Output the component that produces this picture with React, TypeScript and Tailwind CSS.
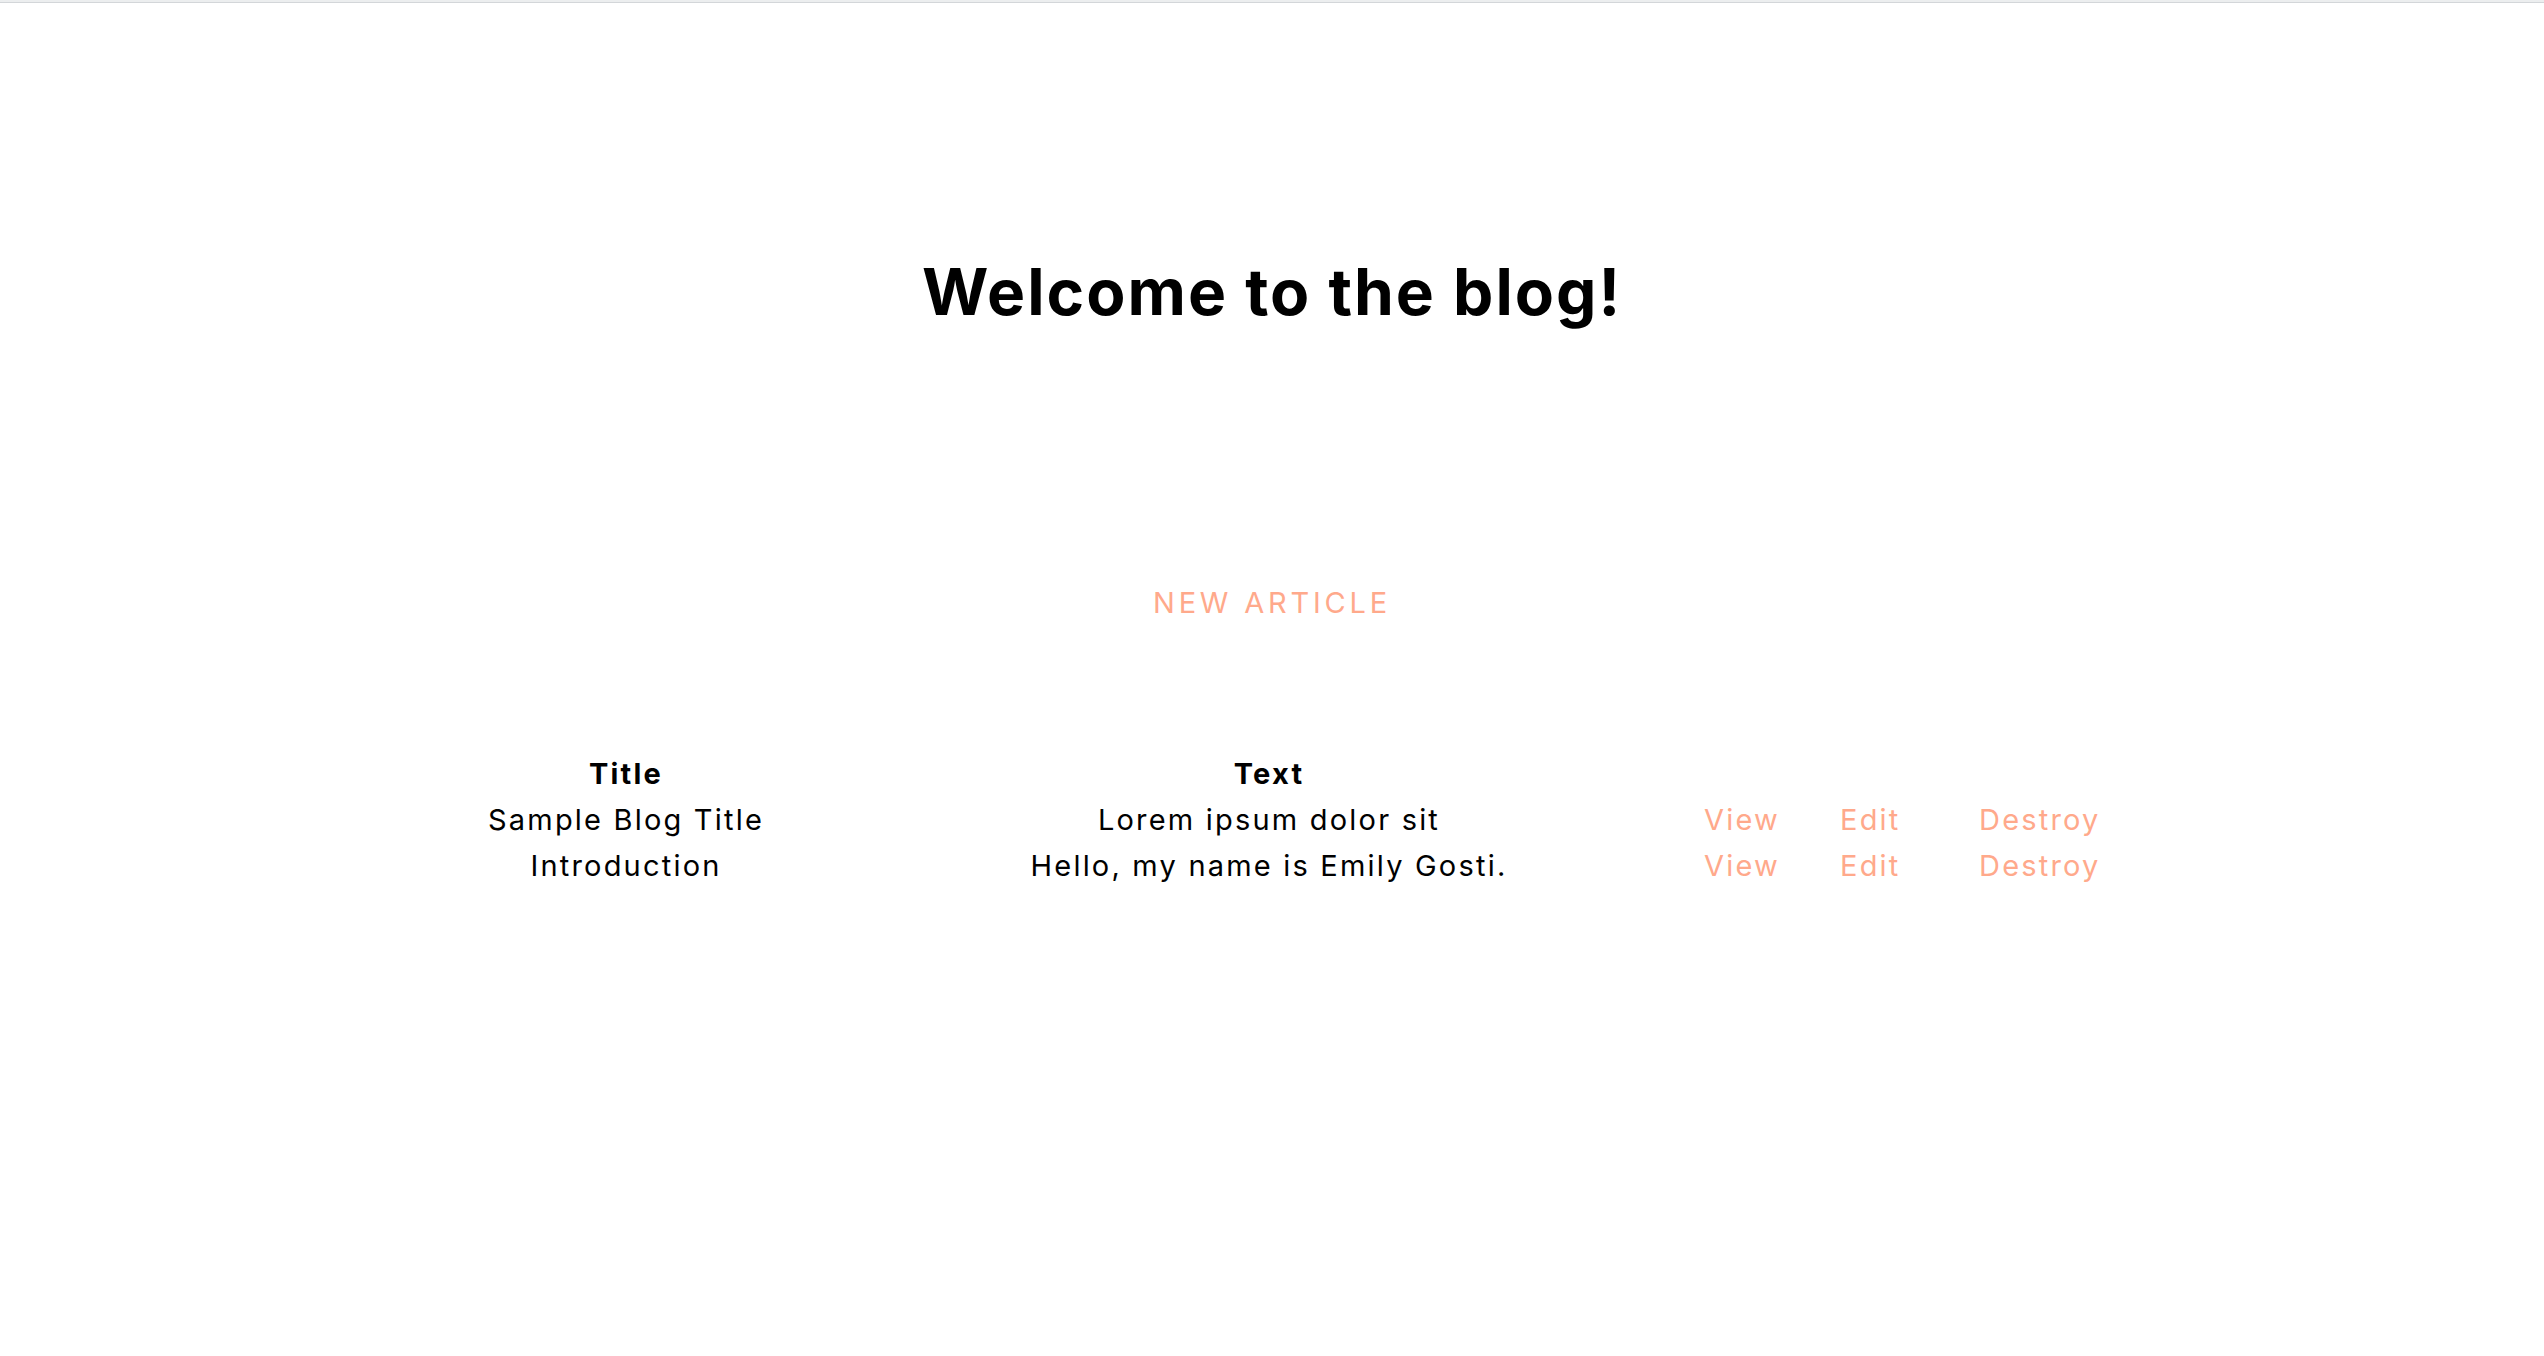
import React from 'react';

interface Article {
  title: string;
  text: string;
}

const articles: Article[] = [
  { title: 'Sample Blog Title', text: 'Lorem ipsum dolor sit' },
  { title: 'Introduction', text: 'Hello, my name is Emily Gosti.' },
];

const linkClass = 'text-[#ffa98b] no-underline';

const App: React.FC = () => {
  return (
    <div className="min-h-[1356px] bg-white text-black font-['Inter','Liberation_Sans',sans-serif]">
      {/* top strip */}
      <div className="h-[3px] bg-[#eceeef] border-b border-[#d3d6d9]" />

      {/* Heading */}
      <h1 className="mt-[257px] text-center text-[64px] leading-none font-bold tracking-[2px]">
        Welcome to the blog!
      </h1>

      {/* New article */}
      <div className="mt-[264px] text-center text-[29px] leading-none tracking-[3.8px]">
        <a href="#" className={linkClass}>NEW ARTICLE</a>
      </div>

      {/* Articles */}
      <div className="mt-[134px] pl-[254px] grid grid-cols-[744px_542px_300px_139px_200px] text-[29px] leading-[46px] tracking-[2.2px]">
        <div className="text-center font-bold">Title</div>
        <div className="text-center font-bold">Text</div>
        <div />
        <div />
        <div />
        {articles.map((a) => (
          <React.Fragment key={a.title}>
            <div className="text-center">{a.title}</div>
            <div className="text-center">{a.text}</div>
            <div className="pl-[164px]">
              <a href="#" className={linkClass}>View</a>
            </div>
            <div>
              <a href="#" className={linkClass}>Edit</a>
            </div>
            <div>
              <a href="#" className={linkClass}>Destroy</a>
            </div>
          </React.Fragment>
        ))}
      </div>
    </div>
  );
};

export default App;
